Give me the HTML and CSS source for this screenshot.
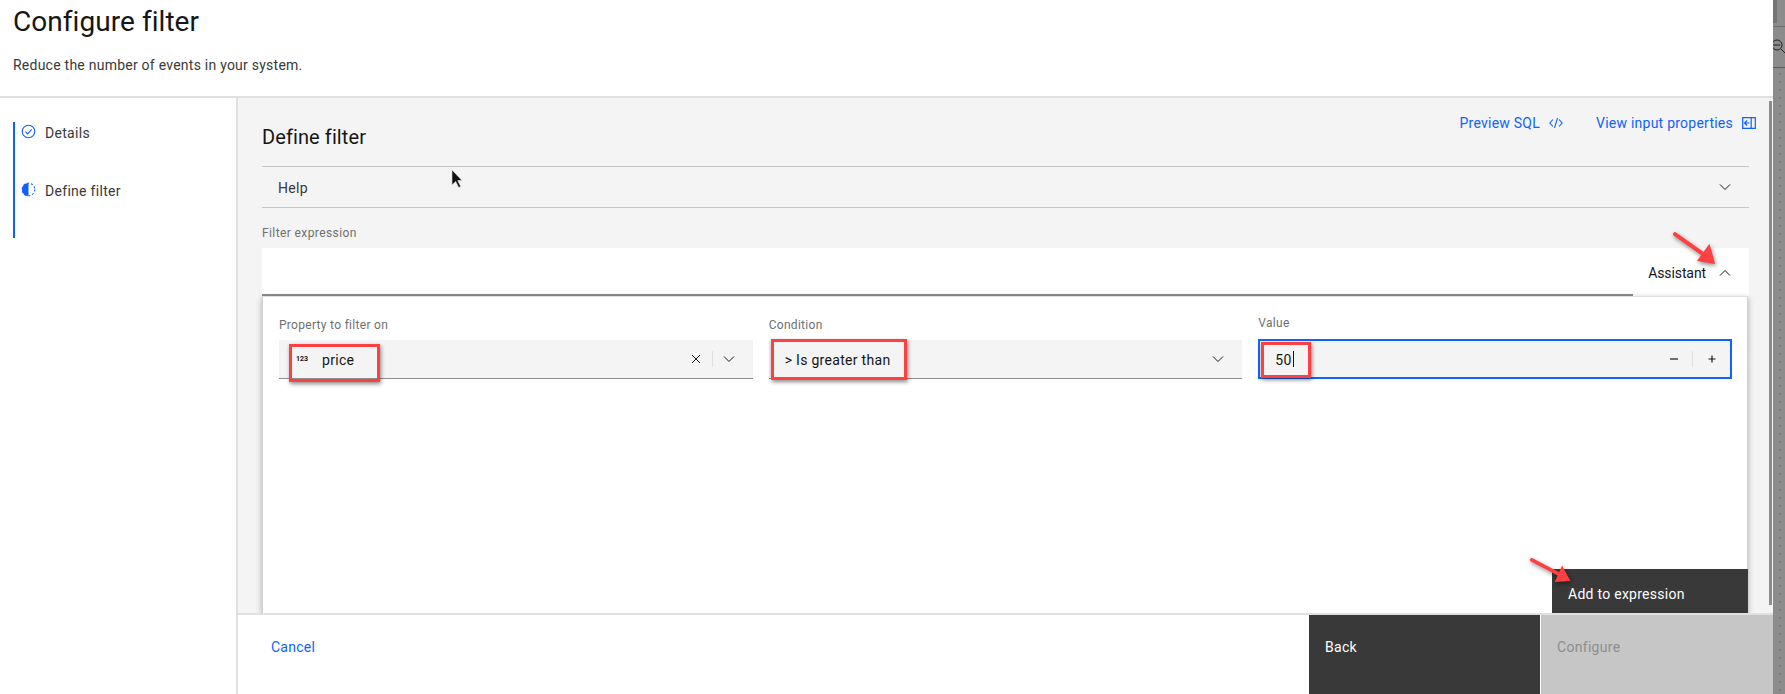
FILE: index.html
```html
<!DOCTYPE html>
<html lang="en">
<head>
<meta charset="utf-8">
<title>Configure filter</title>
<link rel="stylesheet" href="styles.css">
</head>
<body>
<div class="app">
  <div class="sheet">
    <header class="sheet-head">
      <h1 class="sheet-title">Configure filter</h1>
      <p class="sheet-sub">Reduce the number of events in your system.</p>
    </header>
    <div class="sheet-body">
      <nav class="steps">
        <div class="steps-list">
          <div class="step step-first">
            <svg class="step-icon" viewBox="0 0 16 16"><circle cx="8" cy="8" r="6.7" fill="none" stroke="#0f62fe" stroke-width="1.2"/><path d="M4.7 8.200 7 10.500 11.400 5.700" fill="none" stroke="#0f62fe" stroke-width="1.2"/></svg>
            <span>Details</span>
          </div>
          <div class="step">
            <svg class="step-icon" viewBox="0 0 16 16"><path d="M8 1a7 7 0 0 0 0 14z" fill="#0f62fe"/><circle cx="8" cy="8" r="6.700" fill="none" stroke="#0f62fe" stroke-width="1.2" stroke-dasharray="2 2.200"/></svg>
            <span>Define filter</span>
          </div>
        </div>
      </nav>
      <div class="main">
        <div class="content">
          <div class="content-head">
            <h2 class="content-title">Define filter</h2>
            <div class="links">
              <a class="link">Preview SQL
                <svg class="link-icon" viewBox="0 0 16 16"><path d="M4.500 4 1 8l3.500 4M11.500 4 15 8l-3.500 4M9.700 2.500 6.300 13.500" fill="none" stroke="#0f62fe" stroke-width="1.300"/></svg>
              </a>
              <a class="link">View input properties
                <svg class="link-icon" viewBox="0 0 16 16"><path d="M.8 1.800h14.400v12.400H.8zM10.500 1.800v12.400M8.500 8H3M5.800 5.200 3 8l2.800 2.800" fill="none" stroke="#0f62fe" stroke-width="1.400"/></svg>
              </a>
            </div>
          </div>
          <div class="accordion">
            <span class="accordion-text">Help</span>
            <svg class="chev" viewBox="0 0 16 16"><path d="M3 5.500 8 10.500l5-5" fill="none" stroke="#161616" stroke-width="1"/></svg>
          </div>
          <div class="expr-label">Filter expression</div>
          <div class="expr-row">
            <div class="expr-input"></div>
            <div class="assistant">
              <span>Assistant</span>
              <svg class="chev" viewBox="0 0 16 16"><path d="M3 10.500 8 5.500l5 5" fill="none" stroke="#161616" stroke-width="1"/></svg>
            </div>
          </div>
          <section class="panel">
            <div class="fields">
              <div class="col">
                <label class="field-label">Property to filter on</label>
                <div class="field">
                  <span class="type-tag">123</span>
                  <span class="field-text field-text-price">price</span>
                  <span class="mark mark-price"></span>
                  <span class="field-actions">
                    <svg class="act" viewBox="0 0 16 16"><path d="M4 4l8 8M12 4l-8 8" fill="none" stroke="#161616" stroke-width="1"/></svg>
                    <i class="sep"></i>
                    <svg class="act" viewBox="0 0 16 16"><path d="M3 5.500 8 10.500l5-5" fill="none" stroke="#161616" stroke-width="1"/></svg>
                  </span>
                </div>
              </div>
              <div class="col">
                <label class="field-label">Condition</label>
                <div class="field">
                  <span class="field-text">&gt; Is greater than</span>
                  <span class="mark mark-cond"></span>
                  <span class="field-actions">
                    <svg class="act" viewBox="0 0 16 16"><path d="M3 5.500 8 10.500l5-5" fill="none" stroke="#161616" stroke-width="1"/></svg>
                  </span>
                </div>
              </div>
              <div class="col col-value">
                <label class="field-label">Value</label>
                <div class="field field-focus">
                  <span class="field-text">50</span><i class="caret"></i>
                  <span class="mark mark-value"></span>
                  <span class="field-actions field-actions-num">
                    <svg class="act" viewBox="0 0 16 16"><path d="M4 8h8" fill="none" stroke="#161616" stroke-width="1.200"/></svg>
                    <i class="sep"></i>
                    <svg class="act" viewBox="0 0 16 16"><path d="M4.500 8h7M8 4.500v7" fill="none" stroke="#161616" stroke-width="1.200"/></svg>
                  </span>
                </div>
              </div>
            </div>
            <button class="add-btn">Add to expression</button>
          </section>
          <i class="scrollbar"></i>
        </div>
        <footer class="foot">
          <a class="cancel">Cancel</a>
          <button class="foot-btn foot-back">Back</button>
          <button class="foot-btn foot-configure">Configure</button>
        </footer>
      </div>
    </div>
  </div>
  <aside class="rail">
    <div class="rail-top"><i class="rail-thumb"></i></div>
    <div class="rail-tool">
      <svg class="rail-zoom" viewBox="0 0 16 16"><circle cx="5" cy="6" r="5" fill="none" stroke="#222" stroke-width="1"/><path d="M1 6h7M9 10l5 5" fill="none" stroke="#222" stroke-width="1"/></svg>
    </div>
    <div class="rail-dots"></div>
  </aside>

  <svg class="arrow arrow-a" viewBox="0 0 50 38"><path d="M3 3 37 27" fill="none" stroke="#ff4040" stroke-width="4" stroke-linecap="round"/><path d="M45 34 26 31 39 13z" fill="#ff4040"/></svg>
  <svg class="arrow arrow-b" viewBox="0 0 50 30"><path d="M3 3 32 18" fill="none" stroke="#ff4040" stroke-width="4" stroke-linecap="round"/><path d="M45 26 28 27 36 9z" fill="#ff4040"/></svg>
  <svg class="pointer" viewBox="0 0 12 20"><path d="M1 1v15l3.700-3.500 3 6 2-1-3-6H11z" fill="#111" stroke="#ddd" stroke-width=".6"/></svg>
</div>
</body>
</html>
```

FILE: styles.css
```css
* { box-sizing: border-box; }
html, body { margin: 0; padding: 0; }
body { font-family: Roboto, "Noto Sans", sans-serif; color: #161616; background: #fff; overflow: hidden; }
.app { position: relative; display: flex; width: 1785px; height: 694px; overflow: hidden; }

.sheet { width: 1773px; display: flex; flex-direction: column; background: #fff; }
.sheet-head { height: 98px; padding: 0 13px; border-bottom: 2px solid #e0e0e0; flex: none; }
.sheet-title { margin: 0; font-size: 28px; line-height: 44px; font-weight: 400; letter-spacing: .05px; }
.sheet-sub { margin: 0; padding-top: 11px; font-size: 14px; line-height: 20px; letter-spacing: .24px; color: #393939; }
.sheet-body { flex: 1; display: flex; min-height: 0; }

.steps { width: 238px; flex: none; border-right: 2px solid #e0e0e0; padding: 24px 0 0 13px; }
.steps-list { width: 100%; height: 116px; border-left: 2px solid #0f62fe; padding-left: 6px; }
.step { display: flex; align-items: flex-start; height: 58px; font-size: 14px; line-height: 20px; letter-spacing: .3px; color: #393939; }
.step-icon { width: 15px; height: 15px; margin-right: 9px; margin-top: 2px; flex: none; }
.step span { padding-top: 1px; }

.main { flex: 1; min-width: 0; display: flex; flex-direction: column; }
.content { position: relative; flex: 1; min-height: 0; background: #f4f4f4; padding: 0 24px; display: flex; flex-direction: column; overflow: hidden; }
.content-head { height: 68px; flex: none; display: flex; justify-content: space-between; align-items: flex-start; }
.content-title { margin: 27px 0 0; font-size: 20px; line-height: 24px; font-weight: 400; letter-spacing: .1px; }
.links { display: flex; gap: 33px; margin: 15px -7px 0 0; }
.link { display: flex; align-items: center; gap: 9px; font-size: 14px; line-height: 20px; letter-spacing: .24px; color: #0f62fe; }
.link-icon { width: 14px; height: 14px; flex: none; }
.accordion { height: 42px; flex: none; display: flex; justify-content: space-between; align-items: center; padding: 0 16px; border-top: 1px solid #c6c6c6; border-bottom: 1px solid #c6c6c6; font-size: 14px; letter-spacing: .3px; color: #393939; }
.accordion-text { padding-top: 2px; }
.chev { width: 16px; height: 16px; flex: none; }
.expr-label { margin-top: 17px; height: 23px; flex: none; font-size: 12px; line-height: 16px; letter-spacing: .4px; color: #6f6f6f; }
.expr-row { height: 48px; flex: none; display: flex; background: #fff; }
.expr-input { flex: 1; border-bottom: 2px solid #8d8d8d; }
.assistant { width: 116px; display: flex; align-items: center; justify-content: flex-end; gap: 11px; padding: 2px 16px 0 0; font-size: 14px; letter-spacing: -.1px; }

.panel { flex: 1; min-height: 0; display: flex; flex-direction: column; align-items: flex-end; background: #fff; border: 1px solid #d0d0d0; border-top-color: #e0e0e0; border-bottom: 0; box-shadow: 0 2px 6px rgba(0,0,0,.3); padding: 20px 0 0 16px; margin-right: 1px; }
.fields { align-self: stretch; display: grid; grid-template-columns: repeat(3, 1fr); gap: 16px; padding-right: 15px; }
.col-value { margin-top: -2px; }
.field-label { display: block; height: 23px; font-size: 12px; line-height: 16px; letter-spacing: .3px; color: #6f6f6f; }
.col-value .field-label { height: 24px; }
.field { position: relative; height: 39px; display: flex; align-items: center; background: #f4f4f4; border-bottom: 1px solid #8d8d8d; padding-left: 16px; font-size: 14px; letter-spacing: .3px; }
.field-focus { height: 40px; border: 2px solid #0f62fe; padding-left: 15px; }
.field-text { color: #161616; padding-top: 2px; }
.field-text-price { margin-left: 15px; }
.type-tag { font-size: 7px; font-weight: 700; width: 12px; letter-spacing: 0; margin-left: 1px; margin-right: -1px; }
.caret { width: 1px; height: 16px; background: #161616; margin-left: 1px; }
.field-actions { margin-left: auto; display: flex; align-items: center; padding-right: 16px; }
.field-actions-num { padding-right: 10px; }
.act { width: 16px; height: 16px; flex: none; }
.sep { width: 1px; height: 16px; background: #e0e0e0; margin: 0 8px; }
.field-actions-num .sep { margin: 0 11px 0 10px; }
.mark { position: absolute; border: 3px solid #ff4040; box-shadow: 1px 2px 4px rgba(0,0,0,.45); pointer-events: none; }
.mark-price { left: 10px; top: 4px; width: 91px; height: 38px; }
.mark-cond { left: 2px; top: -1px; width: 136px; height: 41px; }
.mark-value { left: 1px; top: 1px; width: 50px; height: 36px; }

.add-btn { margin: auto -1px 0 0; width: 196px; height: 44px; flex: none; border: 0; background: #393939; color: #fff; font: inherit; font-size: 14px; letter-spacing: .27px; text-align: left; padding: 6px 0 0 16px; }
.scrollbar { position: absolute; right: 1px; top: 3px; width: 3px; height: 504px; background: #8d8d8d; }

.foot { height: 81px; flex: none; display: flex; align-items: stretch; background: #fff; border-top: 2px solid #e0e0e0; }
.cancel { margin: 0 auto 16px 33px; align-self: center; font-size: 14px; letter-spacing: .25px; color: #0f62fe; }
.foot-btn { border: 0; font: inherit; font-size: 14px; letter-spacing: .3px; text-align: left; padding: 0 0 16px 16px; }
.foot-back { width: 231px; background: #393939; color: #fff; margin-right: 1px; }
.foot-configure { width: 232px; background: #c6c6c6; color: #8d8d8d; }

.rail { width: 12px; flex: none; display: flex; flex-direction: column; background: #8c8c8c; }
.rail-top { height: 26px; flex: none; }
.rail-thumb { display: block; width: 4px; height: 23px; background: #757575; }
.rail-tool { height: 42px; flex: none; border-top: 1px solid #6e6e6e; border-bottom: 1px solid #5e5e5e; overflow: hidden; padding-top: 12px; }
.rail-zoom { display: block; width: 16px; height: 16px; margin-left: -1px; }
.rail-dots { flex: 1; background-image: radial-gradient(#7a7a7a 1px, transparent 1.5px); background-size: 8px 8px; background-position: 3px 2px; }

.arrow { position: absolute; overflow: visible; filter: drop-shadow(1px 2px 2px rgba(0,0,0,.45)); }
.arrow-a { left: 1672px; top: 231px; width: 48px; height: 37px; }
.arrow-b { left: 1529px; top: 557px; width: 46px; height: 28px; }
.pointer { position: absolute; left: 451px; top: 169px; width: 12px; height: 20px; }
```
